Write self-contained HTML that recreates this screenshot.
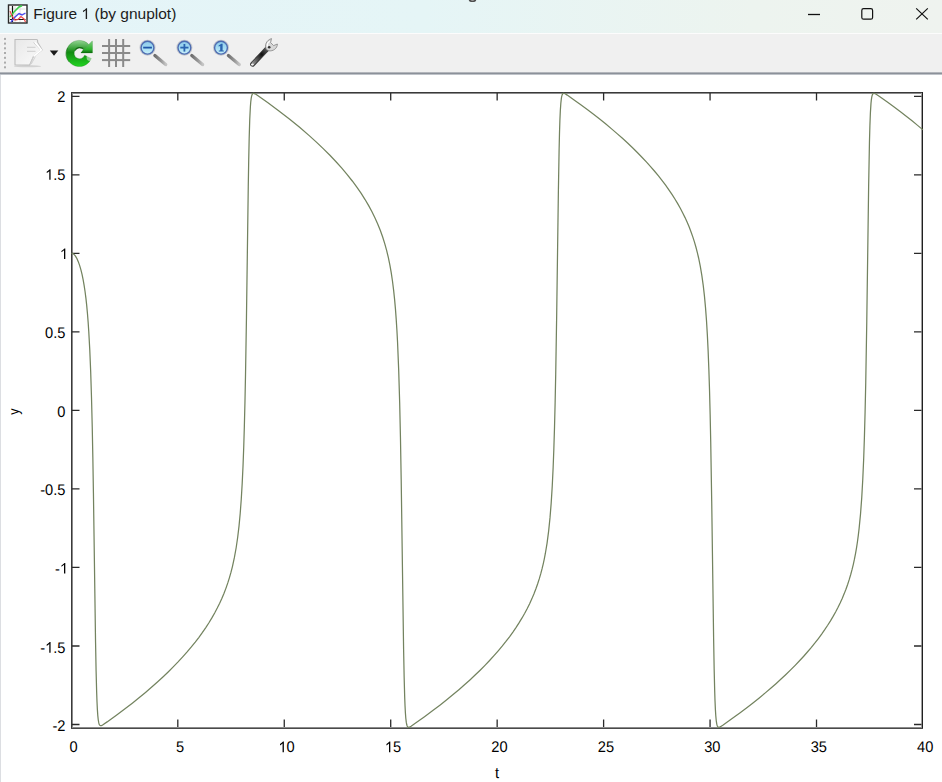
<!DOCTYPE html>
<html><head><meta charset="utf-8"><style>
html,body{margin:0;padding:0;width:942px;height:782px;overflow:hidden;background:#fff;font-family:"Liberation Sans",sans-serif}
.a{position:absolute}
#title{left:0;top:0;width:942px;height:33px;background:linear-gradient(90deg,#e4f4f8 0%,#e5f5f6 45%,#edf4ef 80%,#eff3ef 100%)}
#ttext{left:33.3px;top:4.8px;font-size:15.5px;color:#1c1c1c;white-space:nowrap}
#wl{left:0;top:33px;width:942px;height:1px;background:#fcfcfc}
#tb{left:0;top:34px;width:942px;height:38px;background:#f0f0f0}
#sep{left:0;top:72px;width:942px;height:3px;background:linear-gradient(#c6c8cc,#8b9199 50%,#d9dce1)}
#lb{left:0;top:75px;width:1px;height:707px;background:#dcdee2}
svg{position:absolute;left:0;top:0}
</style></head><body>
<div id="title" class="a"></div>
<div id="ttext" class="a">Figure <span id="one"> </span> (by gnuplot)</div>
<div id="wl" class="a"></div>
<div id="tb" class="a"></div>
<div id="sep" class="a"></div>
<div id="lb" class="a"></div>
<svg width="942" height="782" viewBox="0 0 942 782">
<defs>
<linearGradient id="lens" x1="0" y1="0" x2="0" y2="1"><stop offset="0" stop-color="#8ccbea"/><stop offset=".55" stop-color="#a8def4"/><stop offset="1" stop-color="#c6eef8"/></linearGradient>
<linearGradient id="hdl" x1="0" y1="0" x2="1" y2="0"><stop offset="0" stop-color="#6e6e6e"/><stop offset=".6" stop-color="#9a9a9a"/><stop offset="1" stop-color="#c4c4c4"/></linearGradient>
<linearGradient id="grn" x1="0" y1="0" x2="0" y2="1"><stop offset="0" stop-color="#92d492"/><stop offset=".45" stop-color="#118a11"/><stop offset="1" stop-color="#22d422"/></linearGradient>
<linearGradient id="grh" x1="0" y1="0" x2="0" y2="1"><stop offset="0" stop-color="#7fcc7f"/><stop offset=".7" stop-color="#2fb32f"/><stop offset="1" stop-color="#0a6a0a"/></linearGradient>
<linearGradient id="page" x1="0" y1="0" x2="1" y2="1"><stop offset="0" stop-color="#e8e8e8"/><stop offset="1" stop-color="#fbfbfb"/></linearGradient>
<linearGradient id="wr" x1="0" y1="1" x2="1" y2="0"><stop offset="0" stop-color="#8a8a8a"/><stop offset=".55" stop-color="#111"/><stop offset="1" stop-color="#777"/></linearGradient>
</defs>
<!-- title icon -->
<g>
<rect x="8.5" y="5" width="18.5" height="18" fill="#fff" stroke="#2a2a2a" stroke-width="1.4"/>
<path d="M10,9H25.5M10,14H25.5M15,6V22M20,6V22" stroke="#d8d8d8" stroke-width=".8"/>
<path d="M12.5,6V22M10,19.5H25.5" stroke="#111" stroke-width="1.2"/>
<path d="M10,17L14,12L19,7L22,5.8" stroke="#3ad04a" stroke-width="1.5" fill="none"/>
<path d="M11,22L15,17L19,13.5L22,15L25.5,13" stroke="#4a4af0" stroke-width="1.4" fill="none"/>
<path d="M10,11L12,16L15,20L18,19.5L21,16.5L24,19L25.5,22" stroke="#f04a4a" stroke-width="1.2" fill="none"/>
</g>
<path transform="translate(81.3,19) scale(0.007568,-0.007568)" d="M763,0H583V1147Q430,1010 223,904V1078Q480,1210 646,1409H763Z" fill="#1c1c1c"/>
<ellipse cx="472.5" cy="0" rx="3.7" ry="2.1" fill="#4e4e4e"/><ellipse cx="472.5" cy="0" rx="1.6" ry="1.1" fill="#9a9a9a"/>
<!-- window controls -->
<g stroke="#111" fill="none">
<path d="M808,14.5H820" stroke-width="1.3"/>
<rect x="861.8" y="8.6" width="10.8" height="10.6" rx="1.8" stroke-width="1.2"/>
<path d="M916.2,8.4L927.8,19.4M927.8,8.4L916.2,19.4" stroke-width="1.2"/>
</g>
<!-- toolbar -->
<rect x="4" y="37.9" width="2" height="2" fill="#ababab"/><rect x="3" y="36.9" width="1" height="1" fill="#fff" opacity=".6"/><rect x="4" y="42.6" width="2" height="2" fill="#ababab"/><rect x="3" y="41.6" width="1" height="1" fill="#fff" opacity=".6"/><rect x="4" y="47.3" width="2" height="2" fill="#ababab"/><rect x="3" y="46.3" width="1" height="1" fill="#fff" opacity=".6"/><rect x="4" y="52.0" width="2" height="2" fill="#ababab"/><rect x="3" y="51.0" width="1" height="1" fill="#fff" opacity=".6"/><rect x="4" y="56.8" width="2" height="2" fill="#ababab"/><rect x="3" y="55.8" width="1" height="1" fill="#fff" opacity=".6"/><rect x="4" y="61.6" width="2" height="2" fill="#ababab"/><rect x="3" y="60.6" width="1" height="1" fill="#fff" opacity=".6"/><rect x="4" y="66.3" width="2" height="2" fill="#ababab"/><rect x="3" y="65.3" width="1" height="1" fill="#fff" opacity=".6"/>
<g>
<ellipse cx="27.5" cy="66.2" rx="13.5" ry="1.1" fill="#d2d2d2"/>
<path d="M15,39.5H36.6Q37.6,39.5 37.6,40.5V42.2L42.2,49.8L33.2,57L29.6,65H15Z" fill="url(#page)" stroke="#bdbdbd" stroke-width="1.1"/>
<path d="M33.6,42.6L40.6,49.8L32.8,56.6" fill="none" stroke="#c8c8c8" stroke-width="1"/>
<path d="M35,42.4L41.4,49.8L33.6,56.4" fill="none" stroke="#fff" stroke-width="1.6"/>
<path d="M33,57.5L30.2,64.6M35.4,56.5L31.2,64.2" stroke="#cfcfcf" stroke-width="0.9"/>
<path d="M27,47.4H35.5M27,51.4H35.5" stroke="#d4d4d4" stroke-width="1.1"/>
<path d="M49.8,50.6H58.3L54,55.8Z" fill="#1a1a1a"/>
</g>
<g>
<path d="M92.3,52.9V41.1L88.8,44.5A13.1,13.1 0 1 0 91.4,58.4L84.6,55.2A5.4,5.4 0 1 1 83.4,49.6L80.9,52.9Z" fill="url(#grn)" stroke="#0d6d0d" stroke-width=".5" stroke-opacity=".5"/>
<path d="M92.3,41.1L80.9,52.9H92.3Z" fill="url(#grh)"/>
<path d="M75,50.5A5.6,5.6 0 0 1 83.2,48.6" fill="none" stroke="#0a5e0a" stroke-width="1.2" opacity=".8"/>
<path d="M67.5,48A13,13 0 0 0 69,62" fill="none" stroke="#0b6a0b" stroke-width="1" opacity=".45"/>
<circle cx="90" cy="57.5" r="3.4" fill="#f0f0f0" opacity=".55"/>
</g>
<g fill="#8a8a8a">
<rect x="108.1" y="39" width="2" height="28"/><rect x="115" y="39" width="2" height="28"/><rect x="122.2" y="39" width="2" height="28"/>
<rect x="102" y="45" width="28.2" height="2"/><rect x="102" y="52" width="28.2" height="2"/><rect x="102" y="59.1" width="28.2" height="2"/>
</g>
<g>
<line x1="154.9" y1="55.5" x2="165.7" y2="64.6" stroke="url(#hdl)" stroke-width="3.3" stroke-linecap="round"/>
<circle cx="147.5" cy="47.7" r="8" fill="#b4b8c0" opacity=".75"/>
<circle cx="147.5" cy="47.7" r="7.1" fill="#4d6cb2"/>
<circle cx="147.5" cy="47.7" r="5.7" fill="url(#lens)"/>
<rect x="143.2" y="46.7" width="8.7" height="1.8" fill="#2056a8"/>
</g><g>
<line x1="191.8" y1="55.5" x2="202.6" y2="64.6" stroke="url(#hdl)" stroke-width="3.3" stroke-linecap="round"/>
<circle cx="184.4" cy="47.7" r="8" fill="#b4b8c0" opacity=".75"/>
<circle cx="184.4" cy="47.7" r="7.1" fill="#4d6cb2"/>
<circle cx="184.4" cy="47.7" r="5.7" fill="url(#lens)"/>
<rect x="180.3" y="46.7" width="8.2" height="1.8" fill="#2a64b0"/><rect x="183.5" y="44" width="1.8" height="7.6" fill="#2a64b0"/>
</g><g>
<line x1="228.4" y1="55.5" x2="239.2" y2="64.6" stroke="url(#hdl)" stroke-width="3.3" stroke-linecap="round"/>
<circle cx="221" cy="47.7" r="8" fill="#b4b8c0" opacity=".75"/>
<circle cx="221" cy="47.7" r="7.1" fill="#4d6cb2"/>
<circle cx="221" cy="47.7" r="5.7" fill="url(#lens)"/>
<path d="M218.6,45.6L221.4,43.8H222.6V50.6H223.8V51.6H218.8V50.6H220.2V46L218.6,46.6Z" fill="#2a64b0"/>
</g>
<g>
<path d="M252.6,64.2L268.6,47.2" stroke="#3a3a3a" stroke-width="5" stroke-linecap="round"/>
<path d="M253.4,63.2L268.6,47.2" stroke="url(#wr)" stroke-width="3.2" stroke-linecap="round"/>
<ellipse cx="252.4" cy="64.6" rx="1.5" ry="1.1" fill="#f4f4f4"/>
<path d="M266.4,49.5C264,45.5 266.5,40 271.5,38.6L270.6,42.6L273.6,45.6L277.4,44C277.4,48.5 273,51.5 268.6,50.8Z" fill="#d8d8d8" stroke="#777" stroke-width=".7"/>
<path d="M267.5,46.5C267,44 268.5,42 270,41.5" stroke="#fff" stroke-width="1.2" fill="none"/>
<circle cx="269.2" cy="47.2" r="1.3" fill="#333"/>
</g>
<!-- plot -->
<g shape-rendering="crispEdges">
<rect x="71" y="92" width="1" height="636" fill="#3a3a3a"/><rect x="72" y="93" width="1" height="634" fill="#8a8a8a"/>
<rect x="71" y="92" width="851" height="1" fill="#3a3a3a"/><rect x="72" y="93" width="849" height="1" fill="#8c8c8c"/>
<rect x="922" y="92" width="1" height="637" fill="#202020"/><rect x="921" y="93" width="1" height="635" fill="#a0a0a0"/>
<rect x="71" y="728" width="852" height="1" fill="#4a4a4a"/><rect x="72" y="727" width="850" height="1" fill="#8a8a8a"/>
</g>
<path d="M72,174.82h7.5M921.5,174.82h-7.5M72,253.35h7.5M921.5,253.35h-7.5M72,331.88h7.5M921.5,331.88h-7.5M72,410.40h7.5M921.5,410.40h-7.5M72,488.92h7.5M921.5,488.92h-7.5M72,567.45h7.5M921.5,567.45h-7.5M72,645.98h7.5M921.5,645.98h-7.5M72,96.30h7.5M921.5,96.30h-7.5M72,724.50h7.5M921.5,724.50h-7.5M177.81,727v-7.5M177.81,93v7.5M284.26,727v-7.5M284.26,93v7.5M390.71,727v-7.5M390.71,93v7.5M497.16,727v-7.5M497.16,93v7.5M603.61,727v-7.5M603.61,93v7.5M710.06,727v-7.5M710.06,93v7.5M816.51,727v-7.5M816.51,93v7.5" stroke="#2a2a2a" stroke-width="1.3" fill="none"/>
<path d="M71.36,253.25 L72.07,253.34 L72.78,253.60 L73.49,254.04 L74.20,254.65 L74.91,255.43 L75.61,256.39 L77.01,258.81 L78.37,261.90 L79.68,265.60 L80.93,269.88 L82.10,274.71 L83.17,279.89 L84.16,285.57 L85.08,291.73 L85.94,298.45 L86.72,305.68 L87.45,313.50 L88.13,322.01 L88.75,331.20 L89.78,350.02 L90.69,371.87 L91.50,397.49 L92.25,427.56 L92.84,457.56 L93.43,493.05 L95.56,642.17 L96.10,670.91 L96.65,692.02 L97.00,701.75 L97.37,709.40 L97.78,715.35 L98.24,719.75 L98.75,722.72 L99.04,723.77 L99.36,724.59 L99.72,725.15 L100.12,725.51 L100.59,725.66 L101.14,725.62 L101.92,725.33 L102.97,724.73 L107.12,721.89 L116.39,715.21 L125.35,708.52 L132.30,703.14 L139.02,697.77 L145.50,692.41 L151.75,687.06 L157.44,682.01 L162.91,676.98 L168.17,671.95 L173.23,666.93 L178.07,661.93 L182.70,656.93 L187.13,651.94 L191.34,646.95 L195.24,642.11 L198.95,637.27 L202.47,632.43 L205.79,627.59 L208.93,622.74 L211.89,617.88 L214.66,613.00 L217.26,608.09 L219.68,603.18 L221.94,598.22 L224.04,593.20 L225.99,588.10 L227.79,582.91 L229.46,577.61 L231.01,572.17 L232.43,566.56 L234.41,557.46 L236.16,547.74 L237.69,537.25 L239.04,525.81 L240.22,513.21 L241.26,499.24 L242.19,483.55 L243.02,465.93 L243.72,447.20 L244.36,426.04 L244.96,402.03 L245.52,374.45 L246.47,316.99 L248.26,186.81 L248.72,159.62 L249.17,138.68 L249.74,119.48 L250.39,106.53 L250.75,102.01 L251.15,98.57 L251.61,96.10 L252.15,94.47 L252.65,93.72 L253.24,93.38 L253.97,93.40 L254.94,93.80 L256.23,94.57 L258.38,96.02 L267.62,102.58 L278.95,110.95 L289.71,119.29 L299.90,127.60 L309.51,135.89 L316.67,142.38 L323.48,148.85 L329.93,155.31 L336.04,161.75 L341.80,168.18 L347.21,174.59 L352.29,181.00 L357.02,187.41 L361.19,193.47 L365.07,199.54 L368.66,205.63 L371.97,211.76 L375.02,217.94 L377.81,224.19 L380.35,230.55 L382.67,237.03 L384.74,243.61 L386.62,250.41 L388.31,257.47 L389.85,264.89 L391.22,272.68 L392.46,280.98 L393.58,289.86 L394.59,299.40 L395.44,308.89 L396.20,319.11 L396.91,330.21 L397.55,342.26 L398.69,369.95 L399.69,403.46 L400.46,437.79 L401.19,479.29 L403.60,649.36 L404.15,677.28 L404.70,697.36 L405.04,706.07 L405.41,712.97 L405.81,718.28 L406.27,722.18 L406.78,724.79 L407.07,725.71 L407.39,726.41 L407.75,726.88 L408.15,727.16 L408.61,727.26 L409.17,727.17 L409.98,726.83 L411.08,726.19 L415.62,723.08 L424.52,716.72 L433.12,710.35 L439.89,705.17 L446.44,700.00 L452.78,694.84 L458.89,689.69 L464.50,684.80 L469.91,679.93 L475.12,675.07 L480.14,670.21 L484.96,665.36 L489.58,660.53 L494.00,655.70 L498.23,650.87 L502.17,646.17 L505.93,641.47 L509.51,636.77 L512.91,632.07 L516.13,627.37 L519.17,622.66 L522.04,617.94 L524.73,613.21 L527.26,608.47 L529.63,603.69 L531.84,598.87 L533.90,594.00 L535.82,589.05 L537.60,584.04 L539.25,578.91 L540.78,573.67 L542.02,568.97 L543.18,564.13 L544.26,559.14 L545.26,553.98 L547.07,543.05 L548.63,531.10 L549.99,517.92 L551.18,503.13 L552.22,486.45 L553.14,467.51 L553.86,448.53 L554.52,426.91 L555.14,402.34 L555.71,374.38 L556.66,316.60 L558.38,191.18 L559.11,149.49 L559.50,133.04 L559.90,120.23 L560.34,110.39 L560.83,103.21 L561.36,98.44 L561.66,96.72 L562.00,95.38 L562.37,94.41 L562.78,93.78 L563.27,93.43 L563.86,93.35 L564.42,93.48 L565.10,93.79 L567.22,95.10 L573.76,99.67 L581.14,105.00 L587.60,109.79 L593.87,114.57 L599.96,119.34 L605.86,124.10 L611.57,128.86 L617.10,133.60 L622.44,138.34 L627.59,143.06 L632.56,147.78 L637.34,152.49 L641.93,157.19 L646.34,161.88 L650.57,166.57 L654.61,171.24 L658.47,175.91 L662.15,180.58 L665.60,185.18 L668.87,189.78 L671.98,194.38 L674.91,198.99 L677.69,203.61 L680.30,208.25 L682.75,212.91 L685.05,217.61 L687.19,222.33 L689.20,227.10 L691.06,231.94 L692.80,236.87 L694.41,241.88 L695.90,247.01 L697.28,252.30 L698.56,257.75 L700.31,266.37 L701.86,275.54 L703.23,285.42 L704.45,296.13 L705.53,307.82 L706.50,320.76 L707.36,335.10 L708.14,351.13 L708.87,369.75 L709.54,390.82 L710.15,414.75 L710.73,442.22 L711.71,501.14 L713.62,638.82 L714.15,668.68 L714.68,690.62 L715.02,701.07 L715.39,709.35 L715.79,715.76 L716.24,720.56 L716.74,723.83 L717.03,725.01 L717.34,725.92 L717.68,726.57 L718.07,727.01 L718.52,727.22 L719.05,727.24 L719.68,727.06 L720.48,726.66 L723.15,724.93 L731.44,719.08 L739.81,712.97 L746.49,707.93 L752.97,702.90 L759.25,697.89 L765.32,692.88 L770.73,688.26 L775.97,683.66 L781.04,679.06 L785.92,674.48 L790.64,669.90 L795.17,665.33 L799.53,660.77 L803.72,656.21 L807.63,651.78 L811.38,647.36 L814.96,642.94 L818.38,638.52 L821.65,634.10 L824.74,629.69 L827.69,625.27 L830.48,620.83 L833.12,616.41 L835.60,611.96 L837.94,607.49 L840.15,602.98 L842.21,598.44 L844.14,593.86 L845.95,589.21 L847.64,584.48 L849.20,579.68 L850.66,574.76 L852.02,569.72 L853.27,564.53 L854.44,559.16 L855.52,553.60 L856.52,547.80 L857.45,541.72 L858.30,535.37 L859.09,528.69 L860.51,514.13 L861.74,497.64 L862.80,478.81 L863.65,459.50 L864.40,437.42 L865.09,412.09 L865.74,382.71 L866.78,321.15 L868.63,186.63 L869.45,142.49 L869.91,125.36 L870.41,112.59 L870.97,103.65 L871.29,100.40 L871.64,97.84 L871.96,96.21 L872.31,94.99 L872.71,94.13 L873.17,93.59 L873.69,93.36 L874.33,93.40 L875.12,93.70 L876.21,94.32 L880.25,97.06 L887.68,102.35 L894.15,107.08 L900.45,111.80 L912.04,120.86 L917.59,125.37 L922.96,129.88" fill="none" stroke="#73835f" stroke-width="1.25"/>
<g font-size="14.67" fill="#000" text-rendering="geometricPrecision">
<text transform="translate(57.34,101.80) scale(1,1.05)">2</text><text transform="translate(45.11,179.80) scale(1,1.05)"> .5</text><path transform="translate(45.11,179.80) scale(0.007163,-0.007521)" d="M763,0H583V1147Q430,1010 223,904V1078Q480,1210 646,1409H763Z"/><text transform="translate(59.84,259.00) scale(1,1.05)"> </text><path transform="translate(59.84,259.00) scale(0.007163,-0.007521)" d="M763,0H583V1147Q430,1010 223,904V1078Q480,1210 646,1409H763Z"/><text transform="translate(45.11,337.70) scale(1,1.05)">0.5</text><text transform="translate(57.34,416.70) scale(1,1.05)">0</text><text transform="translate(40.22,494.80) scale(1,1.05)">-0.5</text><text transform="translate(54.96,573.50) scale(1,1.05)">- </text><path transform="translate(59.84,573.50) scale(0.007163,-0.007521)" d="M763,0H583V1147Q430,1010 223,904V1078Q480,1210 646,1409H763Z"/><text transform="translate(40.22,652.70) scale(1,1.05)">- .5</text><path transform="translate(45.11,652.70) scale(0.007163,-0.007521)" d="M763,0H583V1147Q430,1010 223,904V1078Q480,1210 646,1409H763Z"/><text transform="translate(52.46,730.70) scale(1,1.05)">-2</text>
<text transform="translate(69.58,752.20) scale(1,1.05)">0</text><text transform="translate(176.03,752.20) scale(1,1.05)">5</text><text transform="translate(278.40,752.20) scale(1,1.05)"> 0</text><path transform="translate(278.40,752.20) scale(0.007163,-0.007521)" d="M763,0H583V1147Q430,1010 223,904V1078Q480,1210 646,1409H763Z"/><text transform="translate(384.85,752.20) scale(1,1.05)"> 5</text><path transform="translate(384.85,752.20) scale(0.007163,-0.007521)" d="M763,0H583V1147Q430,1010 223,904V1078Q480,1210 646,1409H763Z"/><text transform="translate(491.30,752.20) scale(1,1.05)">20</text><text transform="translate(597.75,752.20) scale(1,1.05)">25</text><text transform="translate(704.20,752.20) scale(1,1.05)">30</text><text transform="translate(810.65,752.20) scale(1,1.05)">35</text><text transform="translate(917.10,752.20) scale(1,1.05)">40</text>
<text transform="translate(497,778.4) scale(1,1.05)" text-anchor="middle">t</text>
<text transform="translate(19.2,411.6) rotate(-90) scale(0.85,1)" text-anchor="middle">y</text>
</g>
</svg>
</body></html>
